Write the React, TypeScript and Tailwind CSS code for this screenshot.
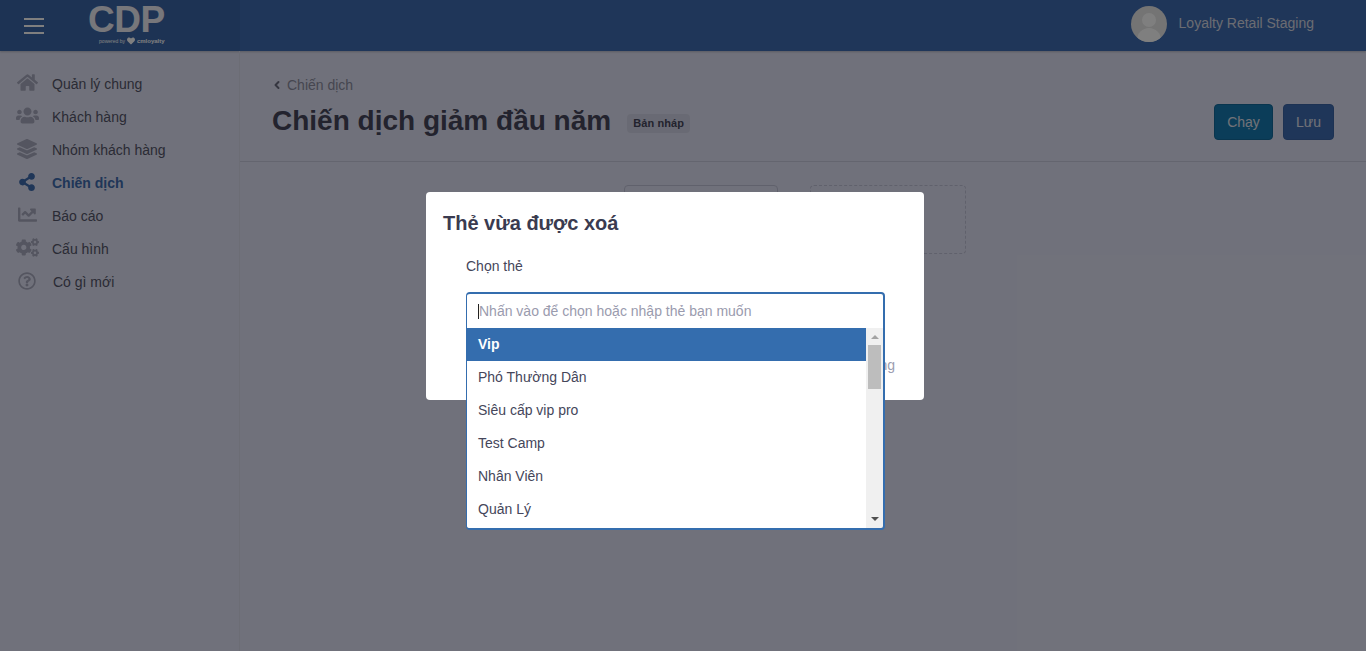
import { ChevronLeft } from "lucide-react";
import {
  FaHome,
  FaUsers,
  FaLayerGroup,
  FaShareAlt,
  FaChartLine,
  FaCogs,
  FaRegQuestionCircle,
  FaHeart,
} from "react-icons/fa";

const menu = [
  { label: "Quản lý chung", icon: FaHome, size: 21 },
  { label: "Khách hàng", icon: FaUsers, size: 23 },
  { label: "Nhóm khách hàng", icon: FaLayerGroup, size: 20 },
  { label: "Chiến dịch", icon: FaShareAlt, size: 18, active: true },
  { label: "Báo cáo", icon: FaChartLine, size: 19 },
  { label: "Cấu hình", icon: FaCogs, size: 23 },
  { label: "Có gì mới", icon: FaRegQuestionCircle, size: 18, nudge: true },
];

const options = ["Phó Thường Dân", "Siêu cấp vip pro", "Test Camp", "Nhân Viên", "Quản Lý"];

export default function App() {
  return (
    <div className="relative h-[651px] overflow-hidden bg-[#e1e3f6] font-['Liberation_Sans',Arial,sans-serif] text-[14px] text-[#55566a]">
      <header className="flex h-[51px] items-center bg-[#3f6cb2] shadow-[0_1px_2px_rgba(0,0,0,0.2)]">
        <div className="flex h-full w-[240px] items-center bg-[#3b66a9]">
          <div className="ml-6 flex w-5 flex-col gap-[5px]">
            <span className="h-0.5 bg-white" />
            <span className="h-0.5 bg-white" />
            <span className="h-0.5 bg-white" />
          </div>
          <div className="ml-[44px] flex flex-col items-end self-start pt-[4px]">
            <span className="text-[37px] leading-[32px] font-bold tracking-[-0.5px] text-[#eeeff6]">CDP</span>
            <span className="mt-[2px] flex h-[6px] items-center text-[5px] leading-[6px] whitespace-nowrap text-white">
              powered by <FaHeart className="mx-[2px] text-[8px]" /> <b className="text-[6px] tracking-normal">cmloyalty</b>
            </span>
          </div>
        </div>
        <div className="ml-auto flex items-center pr-[52px] pb-[4px]">
          <div className="relative h-9 w-9 overflow-hidden rounded-full bg-[#e8e8e8]">
            <div className="mx-auto mt-[7px] h-[14px] w-[14px] rounded-full bg-white" />
            <div className="mx-auto mt-px h-5 w-6 rounded-t-full bg-white" />
          </div>
          <span className="ml-[12px] text-[#d6d9e4]">Loyalty Retail Staging</span>
        </div>
      </header>

      <div className="flex h-[600px]">
        <aside className="w-[240px] shrink-0 border-r border-[#d8daeb] pt-[17px]">
          {menu.map((item) => (
            <div
              key={item.label}
              className={
                item.active
                  ? "flex h-[33px] items-center font-bold text-[#3e6cb0]"
                  : "flex h-[33px] items-center"
              }
            >
              <div
                className={
                  item.active
                    ? "flex w-[52px] justify-center pb-[4px] pl-[2px] text-[#3e6cb0]"
                    : "flex w-[52px] justify-center pb-[4px] pl-[2px] text-[#a9abc0]"
                }
              >
                <item.icon size={item.size} />
              </div>
              <span className={item.nudge ? "ml-px" : ""}>{item.label}</span>
            </div>
          ))}
        </aside>

        <main className="min-w-0 flex-1">
          <div className="flex h-[111px] items-start justify-between border-b border-[#c8cadf] pr-[32px] pl-[32px]">
            <div className="pt-[26px]">
              <div className="flex h-4 items-center text-[#8c8da0]">
                <ChevronLeft size={12} strokeWidth={4} className="mr-[4px] ml-[-1px] text-[#6b6c80]" />
                Chiến dịch
              </div>
              <div className="mt-[10px] flex items-center">
                <h1 className="text-[28px] leading-[36px] font-bold text-[#46475c]">Chiến dịch giảm đầu năm</h1>
                <span className="mt-[5px] ml-[16px] rounded-[4px] bg-[#d3d5e8] px-[6px] py-[2px] text-[11px] leading-[15px] font-bold tracking-[0.1px] text-[#46475c]">
                  Bản nháp
                </span>
              </div>
            </div>
            <div className="flex gap-[10px] pt-[53px]">
              <button className="h-9 w-[59px] rounded-[4px] border border-[#126a9c] bg-[#167ab2] text-[#e3e5f0]">Chạy</button>
              <button className="h-9 w-[51px] rounded-[4px] border border-[#3a64a6] bg-[#3f6cb2] text-[#e3e5f0]">Lưu</button>
            </div>
          </div>
          <div className="flex gap-[32px] pt-[23px] pl-[384px]">
            <div className="h-[69px] w-[154px] rounded-[4px] border border-[#c0c2d8]" />
            <div className="h-[69px] w-[156px] rounded-[4px] border border-dashed border-[#c0c2d8]" />
          </div>
        </main>
      </div>

      {/* lop phu + modal */}
      <div className="absolute inset-0 bg-black/50 pt-[192px] pl-[426px]">
        <div className="relative h-[208px] w-[498px] rounded-[4px] bg-white pt-[19px] pl-[17px]">
          <h2 className="text-[20px] leading-[24px] font-bold text-[#3a3b50]">Thẻ vừa được xoá</h2>
          <div className="mt-[21px] ml-[23px] text-[#45465a]">Chọn thẻ</div>
          <div className="absolute top-[163px] right-[29px] text-[#9c9db0]">ng</div>

          <div className="absolute top-[100px] left-[40px] h-[238px] w-[419px] overflow-hidden rounded-[4px] border-2 border-l border-[#346dae]">
            <div className="flex h-[34px] items-center pl-[11px] text-[#9a9bae]">
              <span className="h-[15px] w-px bg-[#222]" />
              Nhấn vào để chọn hoặc nhập thẻ bạn muốn
            </div>
            <div className="flex h-[200px]">
              <ul className="flex-1 bg-white">
                <li className="flex h-[33px] items-center bg-[#346dae] pl-[11px] font-bold text-white">Vip</li>
                {options.map((o) => (
                  <li key={o} className="flex h-[33px] items-center pl-[11px] text-[#45465a]">
                    {o}
                  </li>
                ))}
              </ul>
              <div className="flex w-[17px] flex-col items-center bg-[#f0f0f0]">
                <span className="mt-[7px] h-0 w-0 border-x-[4px] border-b-[4px] border-x-transparent border-b-[#a3a3a3]" />
                <span className="mt-[6px] h-[44px] w-[13px] bg-[#bdbdbd]" />
                <span className="mt-auto mb-[7px] h-0 w-0 border-x-[4px] border-t-[4px] border-x-transparent border-t-[#505050]" />
              </div>
            </div>
          </div>
        </div>
      </div>
    </div>
  );
}
